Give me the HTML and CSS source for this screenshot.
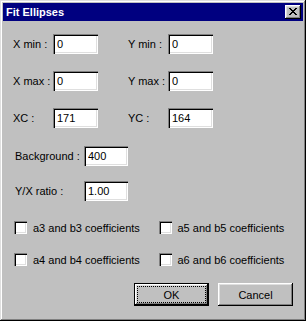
FILE: index.html
```html
<!DOCTYPE html>
<html lang="en">
<head>
  <meta charset="UTF-8">
  <title>Fit Ellipses</title>
  <link rel="stylesheet" href="styles.css">
</head>
<body>
  <div class="window">
    <div class="titlebar">
      <span class="title">Fit Ellipses</span>
      <button class="close" type="button">
        <svg width="8" height="7" viewBox="0 0 8 7" shape-rendering="crispEdges">
          <path fill="#000" d="M0 0h2v1h-2zM6 0h2v1h-2zM1 1h2v1h-2zM5 1h2v1h-2zM2 2h4v1h-4zM3 3h2v1h-2zM2 4h4v1h-4zM1 5h2v1h-2zM5 5h2v1h-2zM0 6h2v1h-2zM6 6h2v1h-2z"/>
        </svg>
      </button>
    </div>

    <div class="pair-row first">
      <div class="pair"><label for="xmin">X min :</label><input class="field" id="xmin" value="0"></div>
      <div class="pair"><label for="ymin">Y min :</label><input class="field" id="ymin" value="0"></div>
    </div>
    <div class="pair-row">
      <div class="pair"><label for="xmax">X max :</label><input class="field" id="xmax" value="0"></div>
      <div class="pair"><label for="ymax">Y max :</label><input class="field" id="ymax" value="0"></div>
    </div>
    <div class="pair-row">
      <div class="pair"><label for="xc">XC :</label><input class="field" id="xc" value="171"></div>
      <div class="pair"><label for="yc">YC :</label><input class="field" id="yc" value="164"></div>
    </div>

    <div class="single-row bg">
      <label for="bg">Background :</label><input class="field" id="bg" value="400">
    </div>
    <div class="single-row ratio">
      <label for="ratio">Y/X ratio :</label><input class="field" id="ratio" value="1.00">
    </div>

    <div class="check-row first-check">
      <label class="check-item"><input type="checkbox" class="check">a3 and b3 coefficients</label>
      <label class="check-item"><input type="checkbox" class="check">a5 and b5 coefficients</label>
    </div>
    <div class="check-row">
      <label class="check-item"><input type="checkbox" class="check">a4 and b4 coefficients</label>
      <label class="check-item"><input type="checkbox" class="check">a6 and b6 coefficients</label>
    </div>

    <div class="buttons">
      <button class="btn default" type="button"><span class="focus">OK</span></button>
      <button class="btn" type="button">Cancel</button>
    </div>
  </div>
</body>
</html>
```

FILE: styles.css
```css
body {
  margin: 0;
  font-family: "Liberation Sans", Arial, sans-serif;
  font-size: 11px;
  color: #000;
  background-color: #c0c0c0;
}
.window {
  width: 306px;
  height: 321px;
  box-sizing: border-box;
  padding: 3px;
  background-color: #c0c0c0;
  box-shadow: inset -1px -1px #000, inset 1px 1px #dfdfdf, inset -2px -2px #808080, inset 2px 2px #fff;
}
.titlebar {
  height: 18px;
  background-color: #000080;
  color: #fff;
  display: flex;
  align-items: center;
  padding: 0 2px 0 3px;
}
.title {
  flex: 1;
  font-weight: bold;
}
.close {
  width: 16px;
  height: 14px;
  border: none;
  padding: 0 1px 1px 0;
  background-color: #c0c0c0;
  box-shadow: inset -1px -1px #000, inset 1px 1px #fff, inset -2px -2px #808080, inset 2px 2px #dfdfdf;
  display: flex;
  align-items: center;
  justify-content: center;
}
.close svg {
  display: block;
}
label {
  white-space: nowrap;
}
.field {
  box-sizing: border-box;
  height: 20px;
  border: none;
  margin: 0;
  padding: 0 0 0 4px;
  font-family: inherit;
  font-size: 11px;
  color: #000;
  background-color: #fff;
  outline: none;
  box-shadow: inset 1px 1px #808080, inset 2px 2px #000, inset -1px -1px #fff, inset -2px -2px #dfdfdf;
}
.pair-row {
  display: flex;
  padding-left: 10px;
  margin-top: 17px;
}
.pair-row.first {
  margin-top: 13px;
}
.pair {
  display: flex;
  align-items: center;
  width: 115px;
}
.pair label {
  width: 40px;
}
.pair .field {
  width: 45px;
}
.single-row {
  display: flex;
  align-items: center;
  padding-left: 12px;
}
.single-row label {
  width: 69px;
}
.single-row .field {
  width: 44px;
}
.bg {
  margin-top: 18px;
}
.ratio {
  margin-top: 15px;
}
.check-row {
  display: flex;
  padding-left: 11px;
  margin-top: 19px;
}
.check-row.first-check {
  margin-top: 20px;
}
.check-item {
  display: flex;
  align-items: center;
  width: 145px;
  height: 13px;
}
.check {
  appearance: none;
  -webkit-appearance: none;
  width: 13px;
  height: 13px;
  margin: 0 6px 0 0;
  background-color: #fff;
  box-shadow: inset 1px 1px #808080, inset 2px 2px #000, inset -1px -1px #fff, inset -2px -2px #dfdfdf;
}
.buttons {
  display: flex;
  justify-content: flex-end;
  gap: 9px;
  padding-right: 10px;
  margin-top: 17px;
}
.btn {
  width: 75px;
  height: 23px;
  border: none;
  padding: 0;
  font-family: inherit;
  font-size: 11px;
  color: #000;
  background-color: #c0c0c0;
  box-shadow: inset -1px -1px #000, inset 1px 1px #fff, inset -2px -2px #808080, inset 2px 2px #dfdfdf;
}
.btn.default {
  display: flex;
  padding: 3px;
  box-shadow: inset 0 0 0 1px #000, inset -2px -2px #000, inset 2px 2px #fff, inset -3px -3px #808080, inset 3px 3px #dfdfdf;
}
.focus {
  flex: 1;
  display: flex;
  align-items: center;
  justify-content: center;
  border: 1px dotted #000;
}
```
